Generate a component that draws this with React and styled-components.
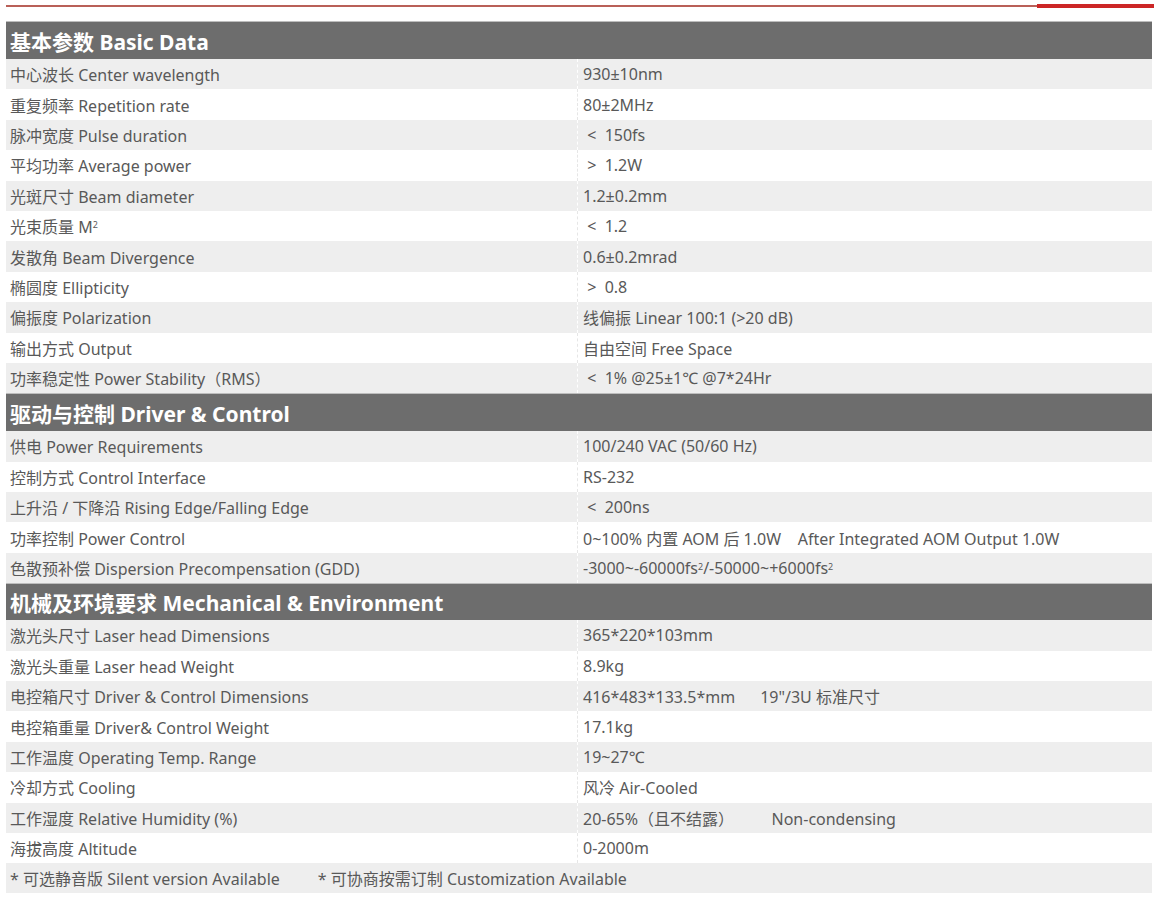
import React from "react";
import styled, { createGlobalStyle } from "styled-components";

const GlobalStyle = createGlobalStyle`
  body {
    margin: 0;
    background: #fff;
    font-family: "Noto Sans", "Noto Sans CJK SC", sans-serif;
  }
`;

const Sup = styled.sup`
  font-size: 9px;
  line-height: 0;
  position: relative;
  top: -1px;
`;

const sections = [
  {
    title: "基本参数 Basic Data",
    height: 38,
    rows: [
      ["中心波长 Center wavelength", "930±10nm"],
      ["重复频率 Repetition rate", "80±2MHz"],
      ["脉冲宽度 Pulse duration", " <  150fs"],
      ["平均功率 Average power", " >  1.2W"],
      ["光斑尺寸 Beam diameter", "1.2±0.2mm"],
      [<>光束质量 M<Sup>2</Sup></>, " <  1.2"],
      ["发散角 Beam Divergence", "0.6±0.2mrad"],
      ["椭圆度 Ellipticity", " >  0.8"],
      ["偏振度 Polarization", "线偏振 Linear 100:1 (>20 dB)"],
      ["输出方式 Output", "自由空间 Free Space"],
      ["功率稳定性 Power Stability（RMS）", " <  1% @25±1℃ @7*24Hr"],
    ],
  },
  {
    title: "驱动与控制 Driver & Control",
    height: 38,
    rows: [
      ["供电 Power Requirements", "100/240 VAC (50/60 Hz)"],
      ["控制方式 Control Interface", "RS-232"],
      ["上升沿 / 下降沿 Rising Edge/Falling Edge", " <  200ns"],
      ["功率控制 Power Control", "0~100% 内置 AOM 后 1.0W    After Integrated AOM Output 1.0W"],
      [
        "色散预补偿 Dispersion Precompensation (GDD)",
        <>-3000~-60000fs<Sup>2</Sup>/-50000~+6000fs<Sup>2</Sup></>,
      ],
    ],
  },
  {
    title: "机械及环境要求 Mechanical & Environment",
    height: 37,
    rows: [
      ["激光头尺寸 Laser head Dimensions", "365*220*103mm"],
      ["激光头重量 Laser head Weight", "8.9kg"],
      ["电控箱尺寸 Driver & Control Dimensions", "416*483*133.5*mm      19\"/3U 标准尺寸"],
      ["电控箱重量 Driver& Control Weight", "17.1kg"],
      ["工作温度 Operating Temp. Range", "19~27℃"],
      ["冷却方式 Cooling", "风冷 Air-Cooled"],
      ["工作湿度 Relative Humidity (%)", "20-65%（且不结露）         Non-condensing"],
      ["海拔高度 Altitude", "0-2000m"],
    ],
  },
];

const App = () => (
  <Page>
    <GlobalStyle />
    <TopRule>
      <ThinLine />
      <ThickLine />
    </TopRule>
    <Table>
      {sections.map((section) => (
        <React.Fragment key={section.title}>
          <SectionHeader $height={section.height}>{section.title}</SectionHeader>
          {section.rows.map(([label, value], i) => (
            <Row key={i} $shaded={i % 2 === 0}>
              <Label>{label}</Label>
              <Value $shaded={i % 2 === 0}>{value}</Value>
            </Row>
          ))}
        </React.Fragment>
      ))}
      <Footer>
        <span>* 可选静音版 Silent version Available</span>
        <span>* 可协商按需订制 Customization Available</span>
      </Footer>
    </Table>
  </Page>
);

const Page = styled.div`
  width: 1158px;
  height: 897px;
  padding-top: 4px;
  box-sizing: border-box;
`;

const TopRule = styled.div`
  display: flex;
  align-items: center;
  margin-left: 6px;
  width: 1148px;
  height: 4px;
`;

const ThinLine = styled.div`
  flex: 1;
  height: 2px;
  background: #b96058;
`;

const ThickLine = styled.div`
  width: 117px;
  height: 4px;
  background: #cc2626;
`;

const Table = styled.div`
  margin: 13px 0 0 6px;
  width: 1146px;
`;

const SectionHeader = styled.div`
  height: ${(p) => p.$height}px;
  background: #6d6d6d;
  border-top: 1px solid #bdbdbd;
  box-sizing: border-box;
  display: flex;
  align-items: center;
  padding-left: 4px;
  color: #fff;
  font-size: 21px;
  font-weight: 700;
`;

const Row = styled.div`
  display: grid;
  grid-template-columns: 571px 1fr;
  height: 30.4px;
  background: ${(p) => (p.$shaded ? "#eeeeee" : "#ffffff")};
  color: #595959;
  font-size: 16px;
`;

const Label = styled.div`
  display: flex;
  align-items: center;
  padding-left: 4px;
  white-space: pre;
`;

const Value = styled.div`
  display: flex;
  align-items: center;
  padding-left: 5px;
  white-space: pre;
  border-left: 1px dashed ${(p) => (p.$shaded ? "#ffffff" : "#e6e6e6")};
`;

const Footer = styled.div`
  display: flex;
  gap: 38px;
  align-items: center;
  height: 30px;
  padding-left: 4px;
  background: #eeeeee;
  color: #595959;
  font-size: 16px;
`;

export default App;
